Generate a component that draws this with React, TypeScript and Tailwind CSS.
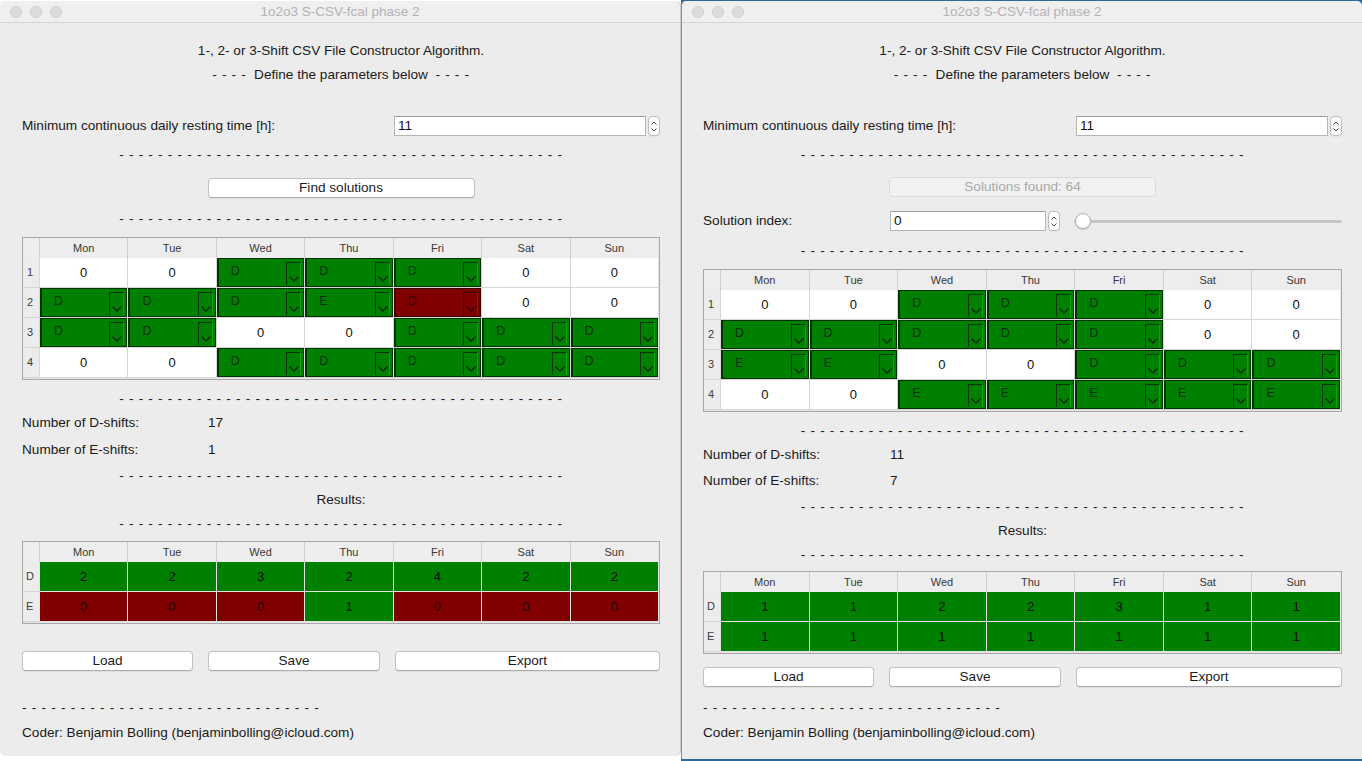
import React from 'react';

const DAYS = ['Mon', 'Tue', 'Wed', 'Thu', 'Fri', 'Sat', 'Sun'];

type Cell = { kind: 'num'; v: string } | { kind: 'combo'; v: string; red?: boolean };

const N: Cell = { kind: 'num', v: '0' };
const D: Cell = { kind: 'combo', v: 'D' };
const E: Cell = { kind: 'combo', v: 'E' };
const DR: Cell = { kind: 'combo', v: 'D', red: true };

const leftGrid: Cell[][] = [
  [N, N, D, D, D, N, N],
  [D, D, D, E, DR, N, N],
  [D, D, N, N, D, D, D],
  [N, N, D, D, D, D, D],
];

const rightGrid: Cell[][] = [
  [N, N, D, D, D, N, N],
  [D, D, D, D, D, N, N],
  [E, E, N, N, D, D, D],
  [N, N, E, E, E, E, E],
];

type RCell = { v: string; red?: boolean };
const leftResults: RCell[][] = [
  [{ v: '2' }, { v: '2' }, { v: '3' }, { v: '2' }, { v: '4' }, { v: '2' }, { v: '2' }],
  [
    { v: '0', red: true },
    { v: '0', red: true },
    { v: '0', red: true },
    { v: '1' },
    { v: '0', red: true },
    { v: '0', red: true },
    { v: '0', red: true },
  ],
];
const rightResults: RCell[][] = [
  [{ v: '1' }, { v: '1' }, { v: '2' }, { v: '2' }, { v: '3' }, { v: '1' }, { v: '1' }],
  [{ v: '1' }, { v: '1' }, { v: '1' }, { v: '1' }, { v: '1' }, { v: '1' }, { v: '1' }],
];

function Dashes({ n, className = '' }: { n: number; className?: string }) {
  return (
    <div className={`h-[20px] leading-[20px] whitespace-pre tracking-[0.72px] ${className}`}>
      {Array(n).fill('-').join(' ')}
    </div>
  );
}

function Combo({ v, red }: { v: string; red?: boolean }) {
  const bg = red ? 'bg-[#800000]' : 'bg-[#008000]';
  const bd = red ? 'border-[#3a0000]' : 'border-[#003300]';
  const tx = red ? 'text-[#3a0000]' : 'text-[#0b300b]';
  const hl = red ? 'border-r-[#a01010]' : 'border-r-[#10a010]';
  return (
    <div className={`relative h-full ${bg} border ${bd} border-l-2`}>
      <span className={`absolute left-[12px] top-[5px] text-[12.5px] leading-[14px] ${tx}`}>{v}</span>
      <div className={`absolute right-[2px] top-[3px] bottom-[1px] w-[15px] border-l border-t ${bd} border-r ${hl}`}>
        <svg width="10" height="6" viewBox="0 0 10 6" className="absolute left-[2px] bottom-[3px]">
          <polyline
            points="0.5,0.5 5,5 9.5,0.5"
            fill="none"
            stroke={red ? '#2a0000' : '#062806'}
            strokeWidth="1.3"
          />
        </svg>
      </div>
    </div>
  );
}

function HeaderRow() {
  return (
    <div className="grid grid-cols-[16px_repeat(7,1fr)] h-[20px] bg-[#ededed]">
      <div />
      {DAYS.map((d) => (
        <div
          key={d}
          className="border-l border-[#cdcdcd] text-center text-[11px] leading-[20px] text-[#383838]"
        >
          {d}
        </div>
      ))}
    </div>
  );
}

function ShiftTable({ rows }: { rows: Cell[][] }) {
  return (
    <div className="border border-[#a8a8a8] bg-[#e6e6e6] pr-px pb-px">
      <HeaderRow />
      {rows.map((r, i) => (
        <div key={i} className="grid grid-cols-[16px_repeat(7,1fr)] h-[30px]">
          <div className="bg-[#ececec] border-b border-[#d4d4d4] text-[11px] leading-[29px] pl-[4px] text-[#3c3c3c]">
            {i + 1}
          </div>
          {r.map((c, j) => (
            <div key={j} className="border-b border-l border-[#d6d6d6] bg-white">
              {c.kind === 'num' ? (
                <div className="h-full text-center text-[13px] leading-[29px] text-[#111]">{c.v}</div>
              ) : (
                <Combo v={c.v} red={c.red} />
              )}
            </div>
          ))}
        </div>
      ))}
    </div>
  );
}

function ResultsTable({ rows }: { rows: RCell[][] }) {
  const labels = ['D', 'E'];
  return (
    <div className="border border-[#a8a8a8] bg-[#e6e6e6] pr-px pb-px">
      <HeaderRow />
      {rows.map((r, i) => (
        <div key={i} className="grid grid-cols-[16px_repeat(7,1fr)] h-[30px]">
          <div className="bg-[#ececec] border-b border-[#d4d4d4] text-[11px] leading-[29px] pl-[3px] text-[#3c3c3c]">
            {labels[i]}
          </div>
          {r.map((c, j) => (
            <div
              key={j}
              className={`border-b border-l border-[#e4e4e4] text-center text-[13px] leading-[29px] ${
                c.red ? 'bg-[#800000] text-[#220000]' : 'bg-[#008000] text-[#0a0a0a]'
              }`}
            >
              {c.v}
            </div>
          ))}
        </div>
      ))}
    </div>
  );
}

function Button({ label, className = '', disabled }: { label: string; className?: string; disabled?: boolean }) {
  return (
    <div
      className={`h-[20px] rounded-[4px] border text-center leading-[18px] ${
        disabled
          ? 'bg-[#f1f1f1] border-[#dadada] text-[#a9a9a9]'
          : 'bg-white border-[#c2c2c2] border-b-[#ababab] text-[#1c1c1c] shadow-[0_1px_1px_rgba(0,0,0,0.06)]'
      } ${className}`}
    >
      {label}
    </div>
  );
}

function Stepper() {
  return (
    <div className="w-[12px] h-[20px] rounded-[4px] border border-[#bdbdbd] bg-white flex flex-col items-center justify-center gap-[3px] shadow-[0_1px_1px_rgba(0,0,0,0.05)]">
      <svg width="6" height="4" viewBox="0 0 6 4">
        <polyline points="0.5,3.5 3,1 5.5,3.5" fill="none" stroke="#444" strokeWidth="1" />
      </svg>
      <svg width="6" height="4" viewBox="0 0 6 4">
        <polyline points="0.5,0.5 3,3 5.5,0.5" fill="none" stroke="#444" strokeWidth="1" />
      </svg>
    </div>
  );
}

function SpinBox({ value, width }: { value: string; width: string }) {
  return (
    <div className="flex items-center gap-[2px]">
      <div
        className={`${width} h-[20px] bg-white border border-[#b5b5b5] border-t-[#9c9c9c] leading-[18px] pl-[3px] text-[#111]`}
      >
        {value}
      </div>
      <Stepper />
    </div>
  );
}

function TitleBar() {
  return (
    <div className="relative h-[22px] bg-[#efefef] border-b border-[#d3d3d3] rounded-t-[5px] flex items-center shrink-0">
      <div className="flex gap-[8px] pl-[10px]">
        <div className="w-[12px] h-[12px] rounded-full bg-[#dcdcdc] border border-[#cfcfcf]" />
        <div className="w-[12px] h-[12px] rounded-full bg-[#dcdcdc] border border-[#cfcfcf]" />
        <div className="w-[12px] h-[12px] rounded-full bg-[#dcdcdc] border border-[#cfcfcf]" />
      </div>
      <div className="absolute inset-0 text-center text-[13.5px] leading-[22px] text-[#b3b3b3]">
        1o2o3 S-CSV-fcal phase 2
      </div>
    </div>
  );
}

function Header() {
  return (
    <>
      <div className="mt-[18px] h-[20px] leading-[20px] text-center">1-, 2- or 3-Shift CSV File Constructor Algorithm.</div>
      <div className="mt-[4px] h-[20px] leading-[20px] text-center whitespace-pre">
        <span className="tracking-[0.7px]">- - - -</span>
        {'  Define the parameters below  '}
        <span className="tracking-[0.7px]">- - - -</span>
      </div>
      <div className="mt-[31px] h-[20px] flex items-center">
        <div className="w-[373px]">Minimum continuous daily resting time [h]:</div>
        <SpinBox value="11" width="w-[252px]" />
      </div>
      <Dashes n={46} className="mt-[9px] text-center" />
    </>
  );
}

function Footer({ gapTop }: { gapTop: string }) {
  return (
    <div className={`${gapTop} flex gap-[15px]`}>
      <Button label="Load" className="w-[171px]" />
      <Button label="Save" className="w-[172px]" />
      <Button label="Export" className="flex-1" />
    </div>
  );
}

function LeftWindow() {
  return (
    <div className="w-[681px] shrink-0 bg-white pt-[1px] pb-[5px] flex flex-col">
      <div className="flex-1 flex flex-col bg-[#ececec] rounded-[5px] border-r border-[#c9c9c9] overflow-hidden">
        <TitleBar />
        <div className="pl-[22px] pr-[20px] flex flex-col text-[13.6px] text-[#1a1a1a]">
          <Header />
          <div className="mt-[13px] flex justify-center">
            <Button label="Find solutions" className="w-[267px]" />
          </div>
          <Dashes n={46} className="mt-[11px] text-center" />
          <div className="mt-[8px]">
            <ShiftTable rows={leftGrid} />
          </div>
          <Dashes n={46} className="mt-[9px] text-center" />
          <div className="mt-[4px] h-[20px] leading-[20px] flex">
            <div className="w-[186px]">Number of D-shifts:</div>
            <div>17</div>
          </div>
          <div className="mt-[7px] h-[20px] leading-[20px] flex">
            <div className="w-[186px]">Number of E-shifts:</div>
            <div>1</div>
          </div>
          <Dashes n={46} className="mt-[6px] text-center" />
          <div className="mt-[4px] h-[20px] leading-[20px] text-center">Results:</div>
          <Dashes n={46} className="mt-[4px] text-center" />
          <div className="mt-[7px]">
            <ResultsTable rows={leftResults} />
          </div>
          <Footer gapTop="mt-[27px]" />
          <Dashes n={31} className="mt-[27px]" />
          <div className="mt-[5px] h-[20px] leading-[20px]">Coder: Benjamin Bolling (benjaminbolling@icloud.com)</div>
        </div>
      </div>
    </div>
  );
}

function RightWindow() {
  return (
    <div className="w-[681px] shrink-0 bg-[#2b6a9c] pt-[1px] pb-[2px] flex flex-col">
      <div className="flex-1 flex flex-col bg-[#ececec] rounded-t-[5px] border-l border-[#8f8f8f] overflow-hidden">
        <TitleBar />
        <div className="pl-[21px] pr-[20px] flex flex-col text-[13.6px] text-[#1a1a1a]">
          <Header />
          <div className="mt-[12px] flex justify-center">
            <Button label="Solutions found: 64" className="w-[267px]" disabled />
          </div>
          <div className="mt-[14px] h-[20px] flex items-center">
            <div className="w-[187px]">Solution index:</div>
            <SpinBox value="0" width="w-[156px]" />
            <div className="relative flex-1 ml-[14px] h-[20px] flex items-center">
              <div className="w-full h-[3px] rounded-full bg-[#c6c6c6]" />
              <div className="absolute left-[1px] top-[2px] w-[16px] h-[16px] rounded-full bg-white border border-[#b3b3b3] shadow-[0_1px_1px_rgba(0,0,0,0.15)]" />
            </div>
          </div>
          <Dashes n={46} className="mt-[10px] text-center" />
          <div className="mt-[8px]">
            <ShiftTable rows={rightGrid} />
          </div>
          <Dashes n={46} className="mt-[9px] text-center" />
          <div className="mt-[4px] h-[20px] leading-[20px] flex">
            <div className="w-[187px]">Number of D-shifts:</div>
            <div>11</div>
          </div>
          <div className="mt-[6px] h-[20px] leading-[20px] flex">
            <div className="w-[187px]">Number of E-shifts:</div>
            <div>7</div>
          </div>
          <Dashes n={46} className="mt-[6px] text-center" />
          <div className="mt-[4px] h-[20px] leading-[20px] text-center">Results:</div>
          <Dashes n={46} className="mt-[4px] text-center" />
          <div className="mt-[6px]">
            <ResultsTable rows={rightResults} />
          </div>
          <Footer gapTop="mt-[13px]" />
          <Dashes n={31} className="mt-[11px]" />
          <div className="mt-[5px] h-[20px] leading-[20px]">Coder: Benjamin Bolling (benjaminbolling@icloud.com)</div>
        </div>
      </div>
    </div>
  );
}

export default function App() {
  return (
    <div
      className="w-[1362px] h-[761px] flex overflow-hidden bg-white"
      style={{ fontFamily: '"Liberation Sans", Arial, sans-serif' }}
    >
      <LeftWindow />
      <RightWindow />
    </div>
  );
}
